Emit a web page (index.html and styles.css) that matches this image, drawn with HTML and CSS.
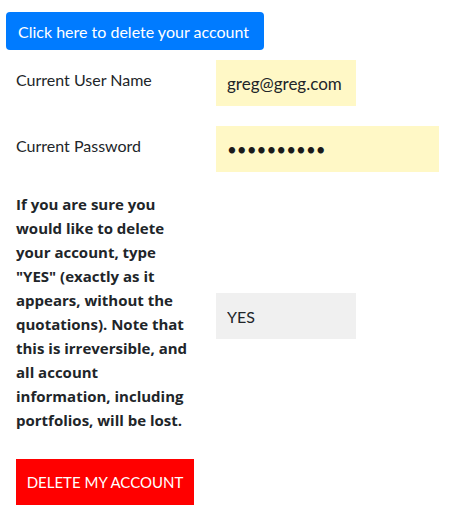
FILE: index.html
```html
<!DOCTYPE html>
<html>
<head>
<meta charset="utf-8">
<link rel="stylesheet" href="styles.css">
</head>
<body>
<div class="page">
  <button class="toggle-btn" type="button">Click here to delete your account</button>
  <form class="delete-form">
    <div class="row row-user">
      <label class="label" for="user">Current User Name</label>
      <input class="field field-user" id="user" type="text" value="greg@greg.com" readonly>
    </div>
    <div class="row row-pass">
      <label class="label" for="pass">Current Password</label>
      <input class="field field-pass" id="pass" type="password" value="abcdefghij" readonly>
    </div>
    <div class="row row-confirm">
      <label class="label label-bold" for="confirm">If you are sure you would like to delete your account, type "YES" (exactly as it appears, without the quotations). Note that this is irreversible, and all account information, including portfolios, will be lost.</label>
      <input class="field field-confirm" id="confirm" type="text" value="YES" readonly>
    </div>
    <button class="delete-btn" type="button">DELETE MY ACCOUNT</button>
  </form>
</div>
</body>
</html>
```

FILE: styles.css
```css
html, body {
  margin: 0;
  padding: 0;
  background: #ffffff;
}
body {
  font-family: Lato, "Open Sans", sans-serif;
  color: #212529;
}
.page {
  padding: 12px 0 0 6px;
}
.toggle-btn {
  display: block;
  height: 38px;
  width: 258px;
  padding: 0 12px;
  border: none;
  border-radius: 4px;
  background: #007bff;
  color: #ffffff;
  font-family: inherit;
  font-size: 16px;
  text-align: left;
  cursor: pointer;
}
.delete-form {
  padding: 10px 0 0 10px;
  display: flex;
  flex-direction: column;
}
.row {
  display: grid;
  grid-template-columns: 184px auto;
  column-gap: 16px;
  align-items: center;
  margin-bottom: 20px;
}
.label {
  font-size: 16px;
  line-height: 24px;
  color: #212529;
}
.row-user .label, .row-pass .label {
  align-self: start;
  padding-top: 8px;
}
.label-bold {
  font-family: "Open Sans", sans-serif;
  font-weight: bold;
  font-size: 15px;
  padding-right: 10px;
}
.field {
  box-sizing: border-box;
  height: 46px;
  border: none;
  outline: none;
  padding: 0 11px;
  font-family: inherit;
  font-size: 17px;
  color: #212529;
}
.field-user {
  width: 140px;
  background: #fff8c6;
}
.field-pass {
  width: 223px;
  background: #fff8c6;
  font-size: 17px;
  letter-spacing: 0;
  color: #1a1a1a;
}
.field-confirm {
  width: 140px;
  background: #f0f0f0;
  font-size: 16px;
  margin-top: 8px;
}
.row-confirm {
  margin-bottom: 27px;
}
.delete-btn {
  align-self: flex-start;
  height: 46px;
  width: 178px;
  border: none;
  background: #ff0000;
  color: #ffffff;
  font-family: inherit;
  font-size: 15px;
  padding: 0;
  cursor: pointer;
}
```
